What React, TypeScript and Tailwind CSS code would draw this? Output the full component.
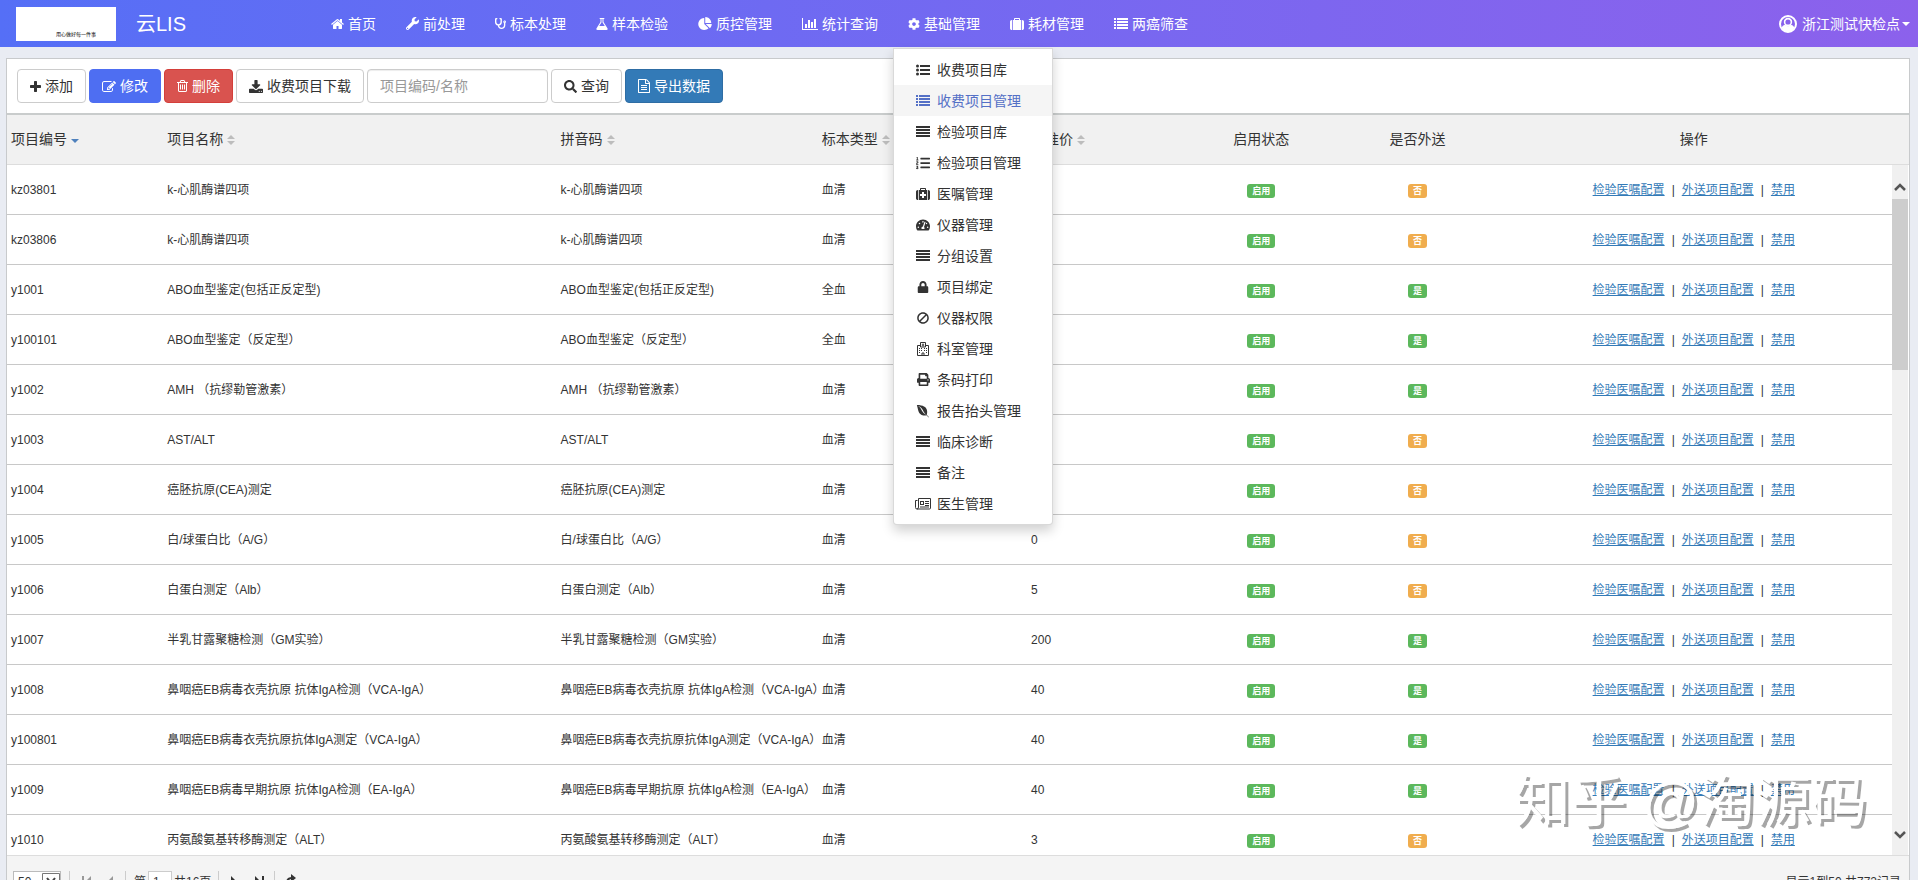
import type { ReactNode } from "react";
import {
  FaBan,
  FaEnvira,
  FaListOl,
  FaLock,
  FaPrint,
  FaSearch,
  FaStethoscope,
  FaTachometerAlt,
  FaWrench,
  FaCog,
} from "react-icons/fa";

const PATHS = {
  home: "M1472 992v480q0 26-19 45t-45 19h-384v-384h-256v384h-384q-26 0-45-19t-19-45v-480q0-1 .5-3t.5-3l575-474 575 474q1 2 1 6zm223-69l-62 74q-8 9-21 11h-3q-13 0-21-7l-692-577-692 577q-12 8-24 7-13-2-21-11l-62-74q-8-10-7-23.5t11-21.5l719-599q32-26 76-26t76 26l244 204v-195q0-14 9-23t23-9h192q14 0 23 9t9 23v408l219 182q10 8 11 21.5t-7 23.5z",
  bars: "M640 896v512h-256v-512h256zm384-512v1024h-256v-1024h256zm1024 1152v128h-2048v-1536h128v1408h1920zm-640-896v768h-256v-768h256zm384-384v1152h-256v-1152h256z",
  pie: "M768 890l546 546q-106 108-247.5 168t-298.5 60q-209 0-385.5-103t-279.5-279.5-103-385.5 103-385.5 279.5-279.5 385.5-103v762zm187 6h773q0 157-60 298.5t-168 247.5zm709-128h-768v-768q209 0 385.5 103t279.5 279.5 103 385.5z",
  flask:
    "M1591 1448q56 89 21.5 152.5t-140.5 63.5h-1152q-106 0-140.5-63.5t21.5-152.5l503-793v-399h-64q-26 0-45-19t-19-45 19-45 45-19h512q26 0 45 19t19 45-19 45-45 19h-64v399zm-779-725l-272 429h712l-272-429-20-31v-436h-128v436z",
  suitcase:
    "M640 256h512v-128h-512v128zm-352 0v1280h-64q-92 0-158-66t-66-158v-832q0-92 66-158t158-66h64zm1120 0v1280h-1024v-1280h128v-160q0-40 28-68t68-28h576q40 0 68 28t28 68v160h128zm384 224v832q0 92-66 158t-158 66h-64v-1280h64q92 0 158 66t66 158z",
  medkit:
    "M1280 992v-192q0-14-9-23t-23-9h-224v-224q0-14-9-23t-23-9h-192q-14 0-23 9t-9 23v224h-224q-14 0-23 9t-9 23v192q0 14 9 23t23 9h224v224q0 14 9 23t23 9h192q14 0 23-9t9-23v-224h224q14 0 23-9t9-23zM640 256h512v-128h-512v128zm-352 0v1280h-64q-92 0-158-66t-66-158v-832q0-92 66-158t158-66h64zm1120 0v1280h-1024v-1280h128v-160q0-40 28-68t68-28h576q40 0 68 28t28 68v160h128zm384 224v832q0 92-66 158t-158 66h-64v-1280h64q92 0 158 66t66 158z",
  plus: "M1600 736v192q0 40-28 68t-68 28h-416v416q0 40-28 68t-68 28h-192q-40 0-68-28t-28-68v-416h-416q-40 0-68-28t-28-68v-192q0-40 28-68t68-28h416v-416q0-40 28-68t68-28h192q40 0 68 28t28 68v416h416q40 0 68 28t28 68z",
  edit: "M888 1184l116-116-152-152-116 116v56h96v96h56zm440-720q-16-16-33 1l-350 350q-17 17-1 33t33-1l350-350q17-17 1-33zm80 594v190q0 119-84.5 203.5t-203.5 84.5h-832q-119 0-203.5-84.5t-84.5-203.5v-832q0-119 84.5-203.5t203.5-84.5h832q63 0 117 25 15 7 18 23 3 17-9 29l-49 49q-14 14-32 8-23-6-45-6h-832q-66 0-113 47t-47 113v832q0 66 47 113t113 47h832q66 0 113-47t47-113v-126q0-13 9-22l64-64q15-15 35-7t20 29zm-96-738l288 288-672 672h-288v-288zm444 132l-92 92-288-288 92-92q28-28 68-28t68 28l152 152q28 28 28 68t-28 68z",
  trash:
    "M704 736v576q0 14-9 23t-23 9h-64q-14 0-23-9t-9-23v-576q0-14 9-23t23-9h64q14 0 23 9t9 23zm256 0v576q0 14-9 23t-23 9h-64q-14 0-23-9t-9-23v-576q0-14 9-23t23-9h64q14 0 23 9t9 23zm256 0v576q0 14-9 23t-23 9h-64q-14 0-23-9t-9-23v-576q0-14 9-23t23-9h64q14 0 23 9t9 23zm128 724v-948h-896v948q0 22 7 40.5t14.5 27 10.5 8.5h832q3 0 10.5-8.5t14.5-27 7-40.5zm-672-1076h448l-48-117q-7-9-17-11h-317q-10 2-17 11zm928 32v64q0 14-9 23t-23 9h-96v948q0 83-47 143.5t-113 60.5h-832q-66 0-113-58.5t-47-141.5v-952h-96q-14 0-23-9t-9-23v-64q0-14 9-23t23-9h309l70-167q15-37 54-63t79-26h320q40 0 79 26t54 63l70 167h309q14 0 23 9t9 23z",
  download:
    "M1344 1344q0-26-19-45t-45-19-45 19-19 45 19 45 45 19 45-19 19-45zm256 0q0-26-19-45t-45-19-45 19-19 45 19 45 45 19 45-19 19-45zm128-224v320q0 40-28 68t-68 28h-1472q-40 0-68-28t-28-68v-320q0-40 28-68t68-28h465l135 136q58 56 136 56t136-56l136-136h464q40 0 68 28t28 68zm-325-569q17 41-14 70l-448 448q-18 19-45 19t-45-19l-448-448q-31-29-14-70 17-39 59-39h256v-448q0-26 19-45t45-19h256q26 0 45 19t19 45v448h256q42 0 59 39z",
  file: "M1596 380q28 28 48 76t20 88v1152q0 40-28 68t-68 28h-1344q-40 0-68-28t-28-68v-1600q0-40 28-68t68-28h896q40 0 88 20t76 48zm-444-244v376h376q-10-29-22-41l-313-313q-12-12-41-22zm384 1528v-1024h-416q-40 0-68-28t-28-68v-416h-768v1536h1280zM512 800q0-14 9-23t23-9h704q14 0 23 9t9 23v64q0 14-9 23t-23 9h-704q-14 0-23-9t-9-23zM512 1056q0-14 9-23t23-9h704q14 0 23 9t9 23v64q0 14-9 23t-23 9h-704q-14 0-23-9t-9-23zM512 1312q0-14 9-23t23-9h704q14 0 23 9t9 23v64q0 14-9 23t-23 9h-704q-14 0-23-9t-9-23z",
};

function Glyph({
  name,
  box,
  className,
}: {
  name: keyof typeof PATHS;
  box: string;
  className: string;
}) {
  return (
    <svg viewBox={box} className={className} fill="currentColor" aria-hidden="true">
      <path d={PATHS[name]} />
    </svg>
  );
}

function ListIcon() {
  return (
    <svg viewBox="0 0 14 12" className="h-3 w-3.5" fill="currentColor" aria-hidden="true">
      <path d="M0 0h2v2H0zM3 0h11v2H3zM0 3h2v2H0zM3 3h11v2H3zM0 6h2v2H0zM3 6h11v2H3zM0 9h2v2H0zM3 9h11v2H3z" />
    </svg>
  );
}

function ListUlIcon() {
  return (
    <svg viewBox="0 0 14 12" className="h-3 w-3.5" fill="currentColor" aria-hidden="true">
      <path d="M4 1h10v2H4zM4 5h10v2H4zM4 9h10v2H4z" />
      <circle cx="1.5" cy="2" r="1.5" />
      <circle cx="1.5" cy="6" r="1.5" />
      <circle cx="1.5" cy="10" r="1.5" />
    </svg>
  );
}

function JustifyIcon() {
  return (
    <svg viewBox="0 0 14 12" className="h-3 w-3.5" fill="currentColor" aria-hidden="true">
      <path d="M0 0h14v2H0zM0 3h14v2H0zM0 6h14v2H0zM0 9h14v2H0z" />
    </svg>
  );
}

function HospitalIcon() {
  return (
    <svg viewBox="0 0 12 14" className="h-3.5 w-3" aria-hidden="true">
      <path
        d="M3.5 3.5h-3v10h11v-10h-3M3.5 5V.5h5V5h-5M5 13.5V11h2v2.5M6 1.5v3M4.8 3h2.4"
        fill="none"
        stroke="currentColor"
      />
      <path
        d="M2 6h1v1H2zM4 6h1v1H4zM7 6h1v1H7zM9 6h1v1H9zM2 8h1v1H2zM4 8h1v1H4zM7 8h1v1H7zM9 8h1v1H9zM2 10h1v1H2zM9 10h1v1H9z"
        fill="currentColor"
      />
    </svg>
  );
}

function NewspaperIcon() {
  return (
    <svg viewBox="0 0 16 12" className="h-3 w-4" aria-hidden="true">
      <path
        d="M3.500 .5h12v9.500q0 1-1 1H2q-1.500 0-1.500-1.500V2.500h2M3.500 .5v8.500q0 2-1.500 2"
        fill="none"
        stroke="currentColor"
      />
      <path
        d="M5 3h4v4H5zM6 4v2h2V4zM10 3h4v1h-4zM10 5h4v1h-4zM10 7h4v1h-4zM5 8.500h9v1H5z"
        fill="currentColor"
        fillRule="evenodd"
      />
    </svg>
  );
}

function UserIcon() {
  return (
    <svg viewBox="0 0 18 18" className="size-[18px]" aria-hidden="true">
      <circle cx="9" cy="9" r="8" fill="none" stroke="currentColor" strokeWidth="2" />
      <circle cx="9" cy="7" r="3.4" fill="none" stroke="currentColor" strokeWidth="1.6" />
      <path d="M2.5 12.5q1.6-2.6 3.6-2.7Q9 12.600 11.900 9.800q2 .1 3.600 2.700Q13 17 9 17t-6.500-4.500z" fill="currentColor" />
    </svg>
  );
}

const NAV: { label: string; icon: ReactNode }[] = [
  { label: "首页", icon: <Glyph name="home" box="64 128 1664 1536" className="h-3 w-[13px]" /> },
  { label: "前处理", icon: <FaWrench className="size-[13px]" /> },
  { label: "标本处理", icon: <FaStethoscope className="size-[11px]" /> },
  { label: "样本检验", icon: <Glyph name="flask" box="128 128 1536 1536" className="size-3" /> },
  { label: "质控管理", icon: <Glyph name="pie" box="0 0 1728 1664" className="h-[13px] w-3.5" /> },
  { label: "统计查询", icon: <Glyph name="bars" box="0 128 2048 1536" className="h-3 w-4" /> },
  { label: "基础管理", icon: <FaCog className="size-3" /> },
  { label: "耗材管理", icon: <Glyph name="suitcase" box="0 0 1792 1536" className="h-3 w-3.5" /> },
  { label: "两癌筛查", icon: <ListIcon /> },
];

const MENU: { label: string; icon: ReactNode }[] = [
  { label: "收费项目库", icon: <ListUlIcon /> },
  { label: "收费项目管理", icon: <ListIcon /> },
  { label: "检验项目库", icon: <JustifyIcon /> },
  { label: "检验项目管理", icon: <FaListOl className="size-3.5" /> },
  { label: "医嘱管理", icon: <Glyph name="medkit" box="0 0 1792 1536" className="h-3 w-3.5" /> },
  { label: "仪器管理", icon: <FaTachometerAlt className="size-3.5" /> },
  { label: "分组设置", icon: <JustifyIcon /> },
  { label: "项目绑定", icon: <FaLock className="size-3" /> },
  { label: "仪器权限", icon: <FaBan className="size-3 -scale-x-100" /> },
  { label: "科室管理", icon: <HospitalIcon /> },
  { label: "条码打印", icon: <FaPrint className="size-[13px]" /> },
  { label: "报告抬头管理", icon: <FaEnvira className="size-3.5" /> },
  { label: "临床诊断", icon: <JustifyIcon /> },
  { label: "备注", icon: <JustifyIcon /> },
  { label: "医生管理", icon: <NewspaperIcon /> },
];

type Row = {
  code: string;
  name: string;
  sample: string;
  price: string;
  sent: boolean;
};

const ROWS: Row[] = [
  { code: "kz03801", name: "k-心肌酶谱四项", sample: "血清", price: "0", sent: false },
  { code: "kz03806", name: "k-心肌酶谱四项", sample: "血清", price: "0", sent: false },
  { code: "y1001", name: "ABO血型鉴定(包括正反定型)", sample: "全血", price: "0", sent: true },
  { code: "y100101", name: "ABO血型鉴定（反定型）", sample: "全血", price: "0", sent: true },
  { code: "y1002", name: "AMH （抗缪勒管激素）", sample: "血清", price: "0", sent: true },
  { code: "y1003", name: "AST/ALT", sample: "血清", price: "0", sent: false },
  { code: "y1004", name: "癌胚抗原(CEA)测定", sample: "血清", price: "0", sent: false },
  { code: "y1005", name: "白/球蛋白比（A/G）", sample: "血清", price: "0", sent: false },
  { code: "y1006", name: "白蛋白测定（Alb）", sample: "血清", price: "5", sent: false },
  { code: "y1007", name: "半乳甘露聚糖检测（GM实验）", sample: "血清", price: "200", sent: true },
  { code: "y1008", name: "鼻咽癌EB病毒衣壳抗原 抗体IgA检测（VCA-IgA）", sample: "血清", price: "40", sent: true },
  { code: "y100801", name: "鼻咽癌EB病毒衣壳抗原抗体IgA测定（VCA-IgA）", sample: "血清", price: "40", sent: true },
  { code: "y1009", name: "鼻咽癌EB病毒早期抗原 抗体IgA检测（EA-IgA）", sample: "血清", price: "40", sent: true },
  { code: "y1010", name: "丙氨酸氨基转移酶测定（ALT）", sample: "血清", price: "3", sent: false },
];

function SortArrows({ active = false }: { active?: boolean }) {
  return (
    <svg viewBox="0 0 8 10" className="ml-1 inline-block h-2.5 w-2" aria-hidden="true">
      {active ? (
        <path d="M0 4h8L4 8z" fill="#4f81bd" />
      ) : (
        <path d="M0 4h8L4 0zM0 6h8l-4 4z" fill="#bdbdbd" />
      )}
    </svg>
  );
}

function Badge({ tone, children }: { tone: "green" | "orange"; children: ReactNode }) {
  return (
    <span
      className={`inline-block h-3.5 rounded-[3px] px-[5px] align-middle text-[9px] leading-[14px] font-bold text-white ${
        tone === "green" ? "bg-[#5cb85c]" : "bg-[#f0ad4e]"
      }`}
    >
      {children}
    </span>
  );
}

function Header() {
  return (
    <header className="flex h-[47px] shrink-0 items-center bg-linear-to-r from-[#556ff6] to-[#8c61ec] text-white">
      <div className="ml-4 flex h-[34px] w-[100px] items-end justify-center bg-white pb-1 pl-5 text-[5px] leading-none text-black">
        用心做好每一件事
      </div>
      <a href="#" className="ml-5 w-[160px] text-[20px]">
        云LIS
      </a>
      <nav className="flex-1 pl-5">
        <ul className="flex text-sm">
          {NAV.map((item) => (
            <li key={item.label} className="relative">
              <a href="#" className="flex h-[47px] items-center gap-1 px-[15px] whitespace-nowrap">
                {item.icon}
                {item.label}
              </a>
              {item.label === "基础管理" && <DropMenu />}
            </li>
          ))}
        </ul>
      </nav>
      <button type="button" className="mr-2 flex items-center gap-[5px] text-sm">
        <UserIcon />
        <span className="flex items-center gap-0.5">
          浙江测试快检点
          <svg viewBox="0 0 8 4" className="h-1 w-2" fill="currentColor" aria-hidden="true">
            <path d="M0 0h8L4 4z" />
          </svg>
        </span>
      </button>
    </header>
  );
}

function DropMenu() {
  return (
    <ul className="absolute top-12 left-0 z-20 w-40 rounded-b border border-black/15 bg-white py-[5px] text-[#333] shadow-[0_6px_12px_rgba(0,0,0,0.18)]">
      {MENU.map((item) => (
        <li key={item.label}>
          <a
            href="#"
            className={`flex h-[31px] items-center gap-[5px] pl-5 ${
              item.label === "收费项目管理" ? "bg-[#f5f5f5] text-[#5470c6]" : ""
            }`}
          >
            <span className="flex w-[18px] justify-center">{item.icon}</span>
            {item.label}
          </a>
        </li>
      ))}
    </ul>
  );
}

function Toolbar() {
  const btn = "flex h-[34px] items-center gap-1 rounded border px-3 whitespace-nowrap";
  return (
    <div className="flex h-[56px] shrink-0 items-center gap-[3px] border-b-2 border-[#c9cccc] pl-2.5 text-sm">
      <button type="button" className={`${btn} border-[#ccc] bg-white`}>
        <Glyph name="plus" box="192 128 1408 1408" className="size-[11px]" />
        添加
      </button>
      <button type="button" className={`${btn} border-[#4e6ef2] bg-[#4e6ef2] text-white`}>
        <Glyph name="edit" box="0 0 1792 1664" className="h-[13px] w-3.5" />
        修改
      </button>
      <button type="button" className={`${btn} border-[#d43f3a] bg-[#d9534f] text-white`}>
        <Glyph name="trash" box="192 128 1408 1536" className="h-3 w-[11px]" />
        删除
      </button>
      <button type="button" className={`${btn} border-[#ccc] bg-white`}>
        <Glyph name="download" box="64 0 1664 1536" className="h-[13px] w-3.5" />
        收费项目下载
      </button>
      <input
        type="text"
        aria-label="项目编码/名称"
        placeholder="项目编码/名称"
        className="h-[34px] w-[181px] rounded border border-[#ccc] px-3 shadow-[inset_0_1px_1px_rgba(0,0,0,0.075)] placeholder:text-[#999]"
      />
      <button type="button" className={`${btn} border-[#ccc] bg-white`}>
        <FaSearch className="size-[13px]" />
        查询
      </button>
      <button type="button" className={`${btn} border-[#2e6da4] bg-[#337ab7] text-white`}>
        <Glyph name="file" box="128 0 1536 1792" className="h-3.5 w-3" />
        导出数据
      </button>
    </div>
  );
}

function ItemTable() {
  const th = "h-[50px] border-b border-[#ddd] px-1 pb-0.5 font-normal whitespace-nowrap";
  const td = "h-[50px] border-b border-[#c8c8c8] px-1 whitespace-nowrap";
  return (
    <table className="w-full table-fixed border-separate border-spacing-0 text-left">
      <colgroup>
        <col className="w-[156px]" />
        <col className="w-[393px]" />
        <col className="w-[261px]" />
        <col className="w-[209px]" />
        <col className="w-[156px]" />
        <col className="w-[156px]" />
        <col className="w-[156px]" />
        <col className="w-[396px]" />
      </colgroup>
      <thead className="bg-[#f1f1f1] text-sm">
        <tr>
          <th className={th}>
            项目编号
            <SortArrows active />
          </th>
          <th className={th}>
            项目名称
            <SortArrows />
          </th>
          <th className={th}>
            拼音码
            <SortArrows />
          </th>
          <th className={th}>
            标本类型
            <SortArrows />
          </th>
          <th className={th}>
            标准价
            <SortArrows />
          </th>
          <th className={`${th} text-center`}>启用状态</th>
          <th className={`${th} text-center`}>是否外送</th>
          <th className={`${th} text-center`}>操作</th>
        </tr>
      </thead>
      <tbody className="text-xs">
        {ROWS.map((row) => (
          <tr key={row.code}>
            <td className={td}>{row.code}</td>
            <td className={td}>{row.name}</td>
            <td className={td}>{row.name}</td>
            <td className={td}>{row.sample}</td>
            <td className={td}>{row.price}</td>
            <td className={`${td} pt-0.5 text-center`}>
              <Badge tone="green">启用</Badge>
            </td>
            <td className={`${td} pt-0.5 text-center`}>
              <Badge tone={row.sent ? "green" : "orange"}>{row.sent ? "是" : "否"}</Badge>
            </td>
            <td className={td}>
              <div className="flex justify-center gap-[7px]">
                <a href="#" className="text-[#337ab7] underline">
                  检验医嘱配置
                </a>
                <span>|</span>
                <a href="#" className="text-[#337ab7] underline">
                  外送项目配置
                </a>
                <span>|</span>
                <a href="#" className="text-[#337ab7] underline">
                  禁用
                </a>
              </div>
            </td>
          </tr>
        ))}
      </tbody>
    </table>
  );
}

function ScrollTrack() {
  return (
    <div className="flex w-[17px] shrink-0 flex-col">
      <div className="h-[50px] shrink-0 border-b border-[#ddd] bg-[#f1f1f1]" />
      <div className="mr-px flex flex-1 flex-col items-center bg-[#f0f0f0] text-[#555]">
        <svg viewBox="0 0 12 8" className="mt-[18px] h-2 w-3 shrink-0" aria-hidden="true">
          <path d="M1 7l5-5 5 5" fill="none" stroke="currentColor" strokeWidth="2.5" />
        </svg>
        <div className="mt-2 h-[171px] w-full shrink-0 bg-[#cdcdcd]" />
        <svg viewBox="0 0 12 8" className="mt-auto mb-4 h-2 w-3 shrink-0" aria-hidden="true">
          <path d="M1 1l5 5 5-5" fill="none" stroke="currentColor" strokeWidth="2.5" />
        </svg>
      </div>
    </div>
  );
}

function Pager() {
  const group = "flex h-full items-center border-r border-[#ccc]";
  return (
    <footer className="flex h-[38px] shrink-0 items-center border-t border-[#ddd] bg-[#f4f4f4] pt-[15px] text-xs">
      <div className={`${group} w-[63px] pl-1.5`}>
        <div className="flex h-full w-12 border border-[#bbb] bg-white">
          <select
            aria-label="每页条数"
            defaultValue="50"
            className="min-w-0 flex-1 appearance-none pl-1"
          >
            <option>50</option>
            <option>100</option>
          </select>
          <svg viewBox="0 0 18 18" className="mt-px size-[18px]" fill="none" aria-hidden="true">
            <path d="M.5.5h17v17H.5z" stroke="#777" />
            <path d="M5 5l4 5 4-5" stroke="#444" strokeWidth="2" />
          </svg>
        </div>
      </div>
      <div className={`${group} w-14 justify-between pr-3 pl-3 text-[#999]`}>
        <button type="button" aria-label="第一页">
          <svg viewBox="0 0 10 12" className="h-3 w-2.5" fill="currentColor">
            <path d="M0 0h2v12H0zM9 0v12L3 6z" />
          </svg>
        </button>
        <button type="button" aria-label="上一页">
          <svg viewBox="0 0 6 12" className="h-3 w-1.5" fill="currentColor">
            <path d="M6 0v12L0 6z" />
          </svg>
        </button>
      </div>
      <label className={`${group} w-[93px] gap-0.5 pl-2`}>
        第
        <input
          type="text"
          defaultValue="1"
          className="h-full w-6 border border-[#ccc] bg-white pl-1"
        />
        共16页
      </label>
      <div className={`${group} w-14 justify-between pr-2.5 pl-3`}>
        <button type="button" aria-label="下一页">
          <svg viewBox="0 0 6 12" className="h-3 w-1.5" fill="currentColor">
            <path d="M0 0v12l6-6z" />
          </svg>
        </button>
        <button type="button" aria-label="最后一页">
          <svg viewBox="0 0 10 12" className="h-3 w-2.5" fill="currentColor">
            <path d="M8 0h2v12H8zM1 0v12l6-6z" />
          </svg>
        </button>
      </div>
      <button type="button" aria-label="刷新" className="ml-2.5">
        <svg viewBox="0 0 12 16" className="h-4 w-3">
          <path d="M2 9q0-5 5-5M10 8q0 5-5 5" fill="none" stroke="currentColor" strokeWidth="2" />
          <path d="M6 0l5 4-5 4zM6 9v7l-5-3z" fill="currentColor" />
        </svg>
      </button>
      <span className="mr-2 ml-auto">显示1到50,共772记录</span>
    </footer>
  );
}

export default function App() {
  return (
    <div className="relative flex h-screen flex-col overflow-hidden bg-[#e9ecf3] font-['Liberation_Sans','Noto_Sans_CJK_SC',sans-serif] text-[#333]">
      <Header />
      <main className="mx-1.5 mt-[11px] mr-2 flex h-[calc(100vh-44px)] shrink-0 flex-col border border-[#c8cacc] bg-white">
        <Toolbar />
        <div className="flex min-h-0 flex-1 overflow-hidden">
          <div className="min-w-0 flex-1">
            <ItemTable />
          </div>
          <ScrollTrack />
        </div>
        <Pager />
      </main>
      <div className="pointer-events-none absolute right-[51px] bottom-[39px] z-10 text-[56px] leading-[78px] text-white [text-shadow:3px_3px_0_rgba(0,0,0,0.35)]">
        知乎 @淘源码
      </div>
    </div>
  );
}
